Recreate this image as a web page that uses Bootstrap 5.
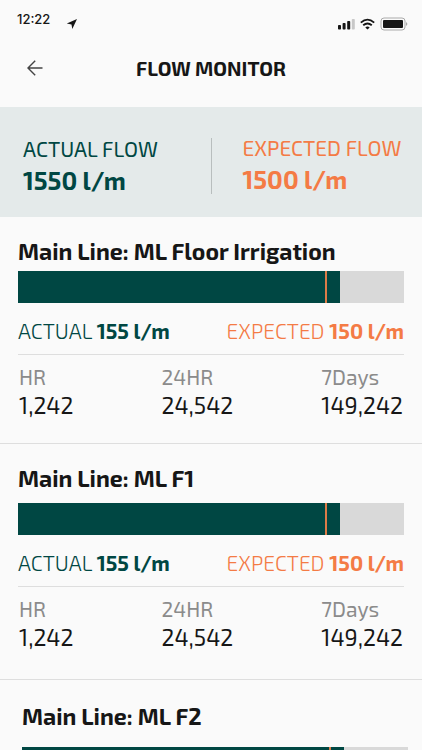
<!DOCTYPE html>
<html lang="en">
<head>
<meta charset="utf-8">
<meta name="viewport" content="width=device-width, initial-scale=1">
<title>Flow Monitor</title>
<link href="https://cdn.jsdelivr.net/npm/bootstrap@5.3.0/dist/css/bootstrap.min.css" rel="stylesheet">
<style>
  :root { --pine: #004743; --coral: #f47b45; --ink: #161616; }
  body { background: #fafafa; color: var(--ink); font-family: "Exo 2", Roboto, sans-serif; overflow-x: hidden; }
  .status { height: 44px; padding: 0 14px 0 17px; }
  .clock { font: 500 13px/16px Inter, sans-serif; margin-top: 11px; }
  .locate { margin: 17px 0 0 16px; }
  .signals { margin-top: 17px; gap: 5px; }
  .topbar { height: 63px; padding: 0 27px; }
  .topbar h1 { font-size: 20px; line-height: 48px; font-weight: 700; }
  .back { width: 16px; height: 48px; color: #444; }
  .side { width: 16px; }
  .summary { background: #e4eaea; height: 110px; display: grid; grid-template-columns: 1fr 1px 1fr; padding-top: 7px; }
  .summary h2 { font-size: 21px; line-height: 28px; font-weight: 400; }
  .summary p { font-size: 25px; line-height: 34px; font-weight: 700; }
  .flow-actual { padding-left: 23px; }
  .flow-expected { padding: 0 0 2px 31px; white-space: nowrap; }
  .rule { height: 56px; background: #b8bebe; }
  .pine { color: var(--pine); }
  .coral { color: var(--coral); }
  .line-item { padding: 18px 18px 24px; border-bottom: 1px solid #dedede; }
  .line-item h2 { font-size: 23px; line-height: 32px; font-weight: 700; margin-bottom: 4px; }
  .line-item.roomy { padding-bottom: 28px; }
  .line-item.roomy h2 { margin-bottom: 9px; }
  .line-item.inset { padding: 20px 14px 24px 22px; }
  .line-item.inset h2 { margin-bottom: 15px; }
  .gauge { height: 32px; background: #d9d9d9; }
  .gauge-fill { background: var(--pine); }
  .gauge-mark { width: 2px; background: #dc7c48; top: 0; bottom: 0; }
  .rates { font-size: 21px; line-height: 32px; padding: 12px 0 7px; border-bottom: 1px solid #dedede; font-weight: 300; }
  .rates strong { font-weight: 700; }
  .totals { line-height: 28px; padding: 8px 1px 0; }
  .totals dt { font-size: 21px; font-weight: 400; color: #8b8b8b; }
  .totals dd { font-size: 23px; }
</style>
</head>
<body>
<div class="status d-flex justify-content-between align-items-start">
  <div class="d-flex align-items-start">
    <span class="clock">12:22</span>
    <svg class="locate" width="12" height="13" viewBox="0 0 12 13" aria-hidden="true"><path d="M11 2 6.3 12 5.5 7.4 .8 6.6Z" fill="#161616"/></svg>
  </div>
  <div class="signals d-flex align-items-center">
    <svg width="17" height="12" viewBox="0 0 17 12" aria-hidden="true"><g fill="#161616"><rect y="7" width="3" height="4.5" rx=".8"/><rect x="4.6" y="5" width="3" height="6.5" rx=".8"/><rect x="9.2" y="3" width="3" height="8.5" rx=".8"/></g><rect x="13.8" y="1" width="3" height="10.5" rx=".8" fill="#c8c8c8"/></svg>
    <svg width="15" height="12" viewBox="0 0 15 12" aria-hidden="true"><g fill="none" stroke="#161616" stroke-width="1.8"><path d="M.8 4.7Q7.5-1.4 14.2 4.7"/><path d="M3.2 7.3q4.3-3.6 8.6 0"/></g><path d="M5.3 9.4q2.2-1.6 4.4 0L7.5 11.6Z" fill="#161616"/></svg>
    <svg width="28" height="14" viewBox="0 0 28 14" aria-hidden="true"><rect x="1" y="1" width="24" height="12" rx="3" fill="none" stroke="#aaa"/><rect x="3" y="3" width="20" height="8" rx="1" fill="#161616"/><path d="M26.2 5v4q2.2-2 0-4" fill="#999"/></svg>
  </div>
</div>
<header class="topbar d-flex justify-content-between align-items-start">
  <button class="back btn p-0 border-0 d-flex align-items-center" type="button" aria-label="Back">
    <svg width="16" height="16" viewBox="0 0 16 16" fill="none" stroke="currentColor" stroke-width="1.4"><path d="M15.5 8H1M8.2.8 1 8l7.2 7.2"/></svg>
  </button>
  <h1 class="m-0">FLOW MONITOR</h1>
  <span class="side"></span>
</header>
<main>
  <section class="summary align-items-center">
    <div class="flow-actual pine"><h2 class="m-0">ACTUAL FLOW</h2><p class="m-0">1550 l/m</p></div>
    <div class="rule"></div>
    <div class="flow-expected coral"><h2 class="m-0">EXPECTED FLOW</h2><p class="m-0">1500 l/m</p></div>
  </section>

  <section class="line-item">
    <h2>Main Line: ML Floor Irrigation</h2>
    <div class="gauge position-relative"><div class="gauge-fill h-100" style="width:83.3%"></div><div class="gauge-mark position-absolute" style="left:79.5%"></div></div>
    <div class="rates d-flex justify-content-between"><span class="pine">ACTUAL <strong>155 l/m</strong></span><span class="coral">EXPECTED <strong>150 l/m</strong></span></div>
    <div class="totals d-flex justify-content-between"><dl class="m-0"><dt>HR</dt><dd class="m-0">1,242</dd></dl><dl class="m-0"><dt>24HR</dt><dd class="m-0">24,542</dd></dl><dl class="m-0"><dt>7Days</dt><dd class="m-0">149,242</dd></dl></div>
  </section>

  <section class="line-item roomy">
    <h2>Main Line: ML F1</h2>
    <div class="gauge position-relative"><div class="gauge-fill h-100" style="width:83.3%"></div><div class="gauge-mark position-absolute" style="left:79.5%"></div></div>
    <div class="rates d-flex justify-content-between"><span class="pine">ACTUAL <strong>155 l/m</strong></span><span class="coral">EXPECTED <strong>150 l/m</strong></span></div>
    <div class="totals d-flex justify-content-between"><dl class="m-0"><dt>HR</dt><dd class="m-0">1,242</dd></dl><dl class="m-0"><dt>24HR</dt><dd class="m-0">24,542</dd></dl><dl class="m-0"><dt>7Days</dt><dd class="m-0">149,242</dd></dl></div>
  </section>

  <section class="line-item inset">
    <h2>Main Line: ML F2</h2>
    <div class="gauge position-relative"><div class="gauge-fill h-100" style="width:83.3%"></div><div class="gauge-mark position-absolute" style="left:79.5%"></div></div>
  </section>
</main>
<script src="https://cdn.jsdelivr.net/npm/bootstrap@5.3.0/dist/js/bootstrap.bundle.min.js"></script>
</body>
</html>
